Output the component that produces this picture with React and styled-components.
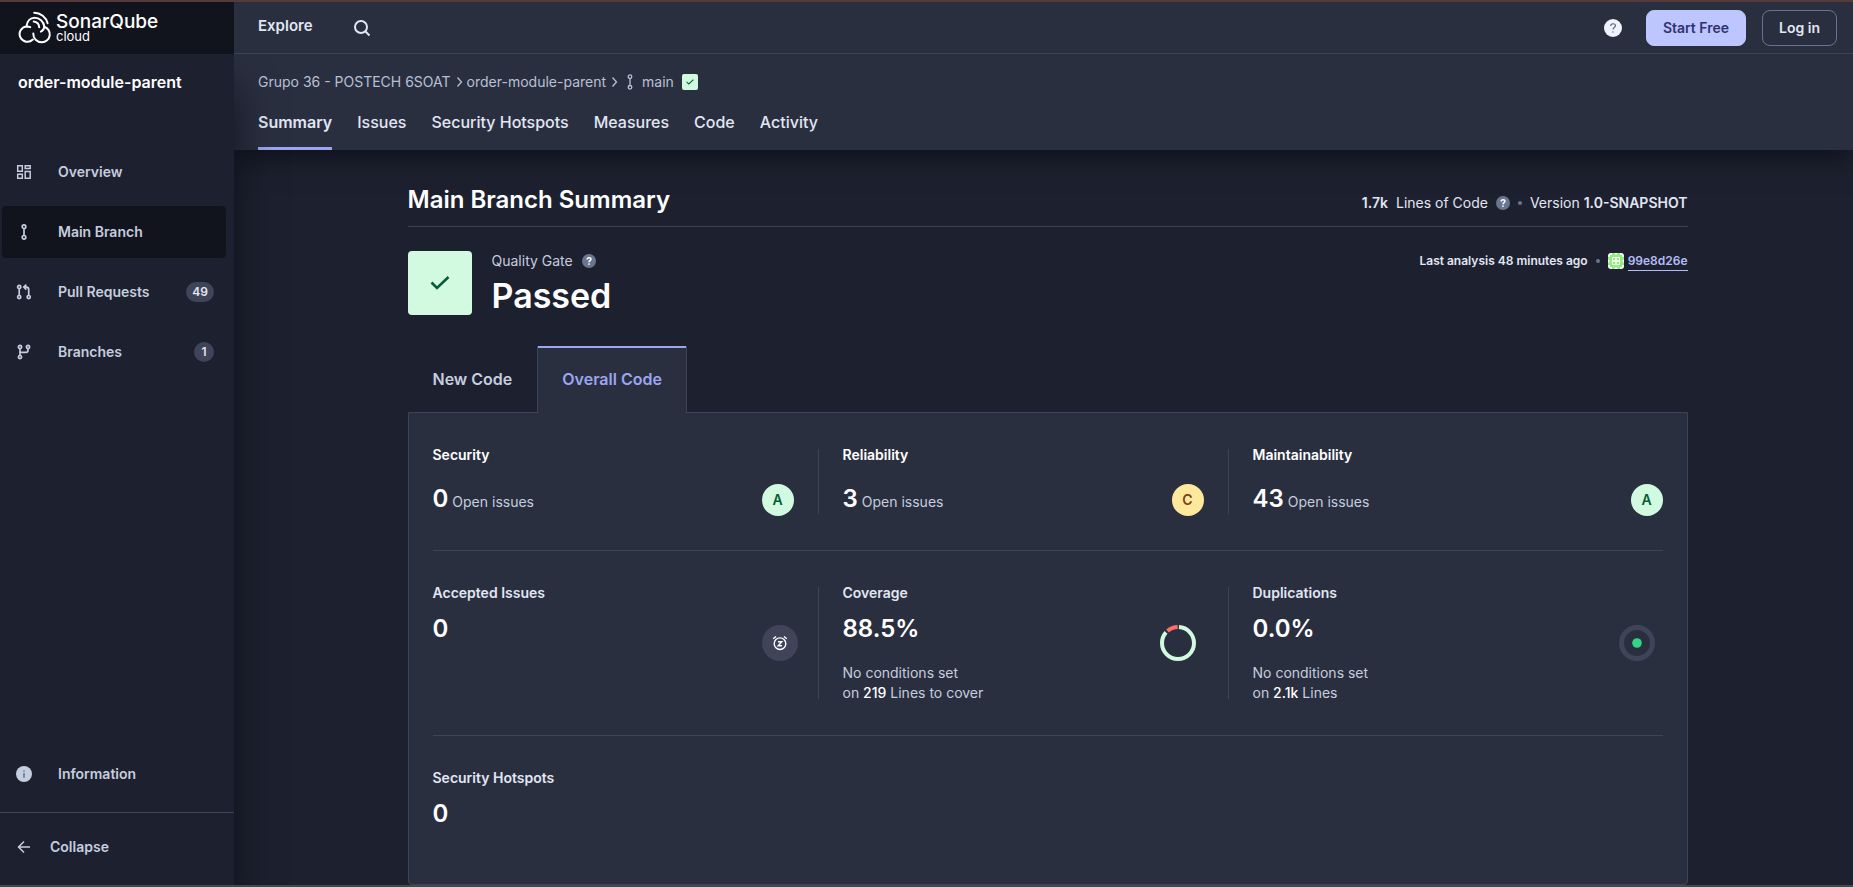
import React from "react";
import styled, { createGlobalStyle } from "styled-components";

const c = {
  bg: "#1d212f",
  panel: "#2a2f40",
  dark: "#11141d",
  line: "#3e4357",
  accent: "#9ba6f0",
  subtle: "#c5cddf",
  text: "#e1e6f3",
  strong: "#ffffff",
  slate: "#6a7590",
  mint: "#d1fae0",
  green: "#055e39",
};

const Global = createGlobalStyle`
  *, *::before, *::after { box-sizing: border-box; }
  body { margin: 0; background: ${c.bg}; color: ${c.text}; font: 400 14px/20px Inter, "Liberation Sans", sans-serif; }
  h1, h2, h3, p, ul { margin: 0; padding: 0; font-size: inherit; font-weight: inherit; }
  ul { list-style: none; }
  a { color: inherit; text-decoration: none; }
  button { font: inherit; color: inherit; background: none; border: 0; padding: 0; cursor: pointer; }
  svg { display: block; flex: none; }
`;

const Frame = styled.div`
  height: 100vh;
  overflow: hidden;
  display: flex;
  flex-direction: column;
  border-top: 2px solid #563a3b;
  border-bottom: 2px solid #45474d;
`;

const TopBar = styled.header`
  display: flex;
  flex: none;
  height: 52px;
  position: relative;
  z-index: 3;
`;

const Brand = styled.a`
  flex: none;
  width: 234px;
  padding-left: 18px;
  display: flex;
  align-items: center;
  gap: 4px;
  background: ${c.dark};
  color: ${c.strong};
`;

const BrandName = styled.span`
  display: flex;
  flex-direction: column;
  font-size: 19px;
  line-height: 16px;
  font-weight: 500;
  small {
    font-size: 13px;
    line-height: 13px;
    font-weight: 400;
  }
`;

const TopNav = styled.nav`
  flex: 1;
  display: flex;
  align-items: center;
  padding: 0 16px 0 24px;
  background: ${c.panel};
  border-bottom: 1px solid ${c.line};
`;

const ExploreLink = styled.a`
  font-size: 15px;
  font-weight: 600;
  margin-right: 40px;
  padding-bottom: 4px;
`;

const TopActions = styled.div`
  margin-left: auto;
  display: flex;
  align-items: center;
  gap: 16px;
`;

const HelpButton = styled.button`
  margin-right: 8px;
`;

const Button = styled.button`
  height: 36px;
  padding: 0 16px;
  border-radius: 8px;
  font-weight: 600;
  border: 1px solid ${(p) => (p.$primary ? "#bdc6ff" : "#6b7193")};
  background: ${(p) => (p.$primary ? "#bdc6ff" : "transparent")};
  color: ${(p) => (p.$primary ? "#2f3370" : c.text)};
`;

const Body = styled.div`
  flex: 1;
  min-height: 0;
  display: flex;
`;

const Sidebar = styled.aside`
  flex: none;
  width: 234px;
  display: flex;
  flex-direction: column;
  background: ${c.bg};
  position: relative;
  z-index: 2;
  box-shadow: 4px 32px 36px rgba(6, 8, 16, 0.55);
`;

const ProjectName = styled.h2`
  font-size: 16px;
  line-height: 24px;
  font-weight: 600;
  padding: 16px 18px 0;
  color: ${c.strong};
`;

const SideList = styled.ul`
  display: flex;
  flex-direction: column;
  gap: 8px;
  margin: ${(p) => (p.$bottom ? "auto 8px 12px 2px" : "52px 8px 0 2px")};
`;

const SideLink = styled.a`
  display: flex;
  align-items: center;
  gap: 26px;
  height: 52px;
  padding: 0 12px 0 14px;
  border-radius: 4px;
  font-weight: 600;
  color: ${c.subtle};
  background: ${(p) => (p.$active ? c.dark : "transparent")};
`;

const Count = styled.span`
  margin-left: auto;
  min-width: 20px;
  padding: 0 6px;
  border-radius: 10px;
  background: #3f4459;
  color: ${c.text};
  font-size: 12px;
  line-height: 20px;
  text-align: center;
`;

const Collapse = styled.button`
  display: flex;
  align-items: center;
  gap: 18px;
  height: 73px;
  padding: 0 16px 4px;
  border-top: 1px solid ${c.line};
  font-weight: 600;
  color: ${c.subtle};
`;

const Main = styled.main`
  flex: 1;
  min-width: 0;
  overflow: hidden;
`;

const ContextBar = styled.div`
  background: ${c.panel};
  padding: 18px 24px 0;
  height: 96px;
  display: flex;
  flex-direction: column;
  justify-content: space-between;
  box-shadow: 0 8px 24px rgba(6, 8, 16, 0.6);
`;

const Crumbs = styled.nav`
  display: flex;
  align-items: center;
  gap: 4px;
  color: #b8c0d6;
`;

const Branch = styled.span`
  display: flex;
  align-items: center;
  gap: 6px;
  padding-left: 2px;
`;

const SmallGate = styled.span`
  width: 16px;
  height: 16px;
  margin-left: 4px;
  border-radius: 2px;
  display: grid;
  place-items: center;
  background: ${c.mint};
`;

const Tabs = styled.nav`
  display: flex;
  gap: 25px;
`;

const Tab = styled.a`
  font-size: 16px;
  line-height: 24px;
  padding-bottom: 13px;
  font-weight: ${(p) => (p.$active ? 600 : 500)};
  border-bottom: 3px solid ${(p) => (p.$active ? c.accent : "transparent")};
`;

const Centered = styled.div`
  padding-left: 8px;
`;

const Content = styled.div`
  max-width: 1280px;
  margin: 0 auto;
  padding-top: 33px;
`;

const TitleRow = styled.div`
  display: flex;
  justify-content: space-between;
  align-items: center;
  height: 44px;
  padding-bottom: 10px;
  border-bottom: 1px solid ${c.line};
`;

const Title = styled.h1`
  font-size: 24px;
  line-height: 32px;
  font-weight: 600;
  color: ${c.strong};
`;

const Meta = styled.div`
  display: flex;
  align-items: center;
  gap: 8px;
  padding-top: ${(p) => (p.$small ? 0 : "6px")};
  font-size: ${(p) => (p.$small ? "12px" : "14px")};
  font-weight: ${(p) => (p.$small ? 600 : 400)};
  b { font-weight: 600; }
`;

const Dot = styled.span`
  width: 4px;
  height: 4px;
  border-radius: 50%;
  background: ${c.slate};
`;

const CommitLink = styled.a`
  color: #b3bcf8;
  line-height: 18px;
  border-bottom: 1px solid #b3bcf8;
`;

const Commit = styled.span`
  display: flex;
  align-items: center;
  gap: 4px;
`;

const GateRow = styled.section`
  display: flex;
  align-items: flex-start;
  justify-content: space-between;
  margin-top: 24px;
`;

const Gate = styled.div`
  display: flex;
  gap: 20px;
`;

const GateBadge = styled.div`
  width: 64px;
  height: 64px;
  border-radius: 4px;
  background: ${c.mint};
  display: grid;
  place-items: center;
`;

const GateLabel = styled.div`
  display: flex;
  align-items: center;
  gap: 9px;
  color: ${c.subtle};
`;

const GateStatus = styled.p`
  font-size: 34px;
  line-height: 50px;
  font-weight: 600;
  color: ${c.strong};
`;

const CodeTabs = styled.div`
  display: flex;
  margin-top: 25px;
`;

const CodeTab = styled.button`
  height: 67px;
  padding: 0 24px 2px;
  font-size: 16px;
  font-weight: 600;
  color: ${(p) => (p.$active ? c.accent : c.subtle)};
  background: ${(p) => (p.$active ? c.panel : "transparent")};
  border: solid ${(p) => (p.$active ? c.line : "transparent")};
  border-width: 0 1px;
  box-shadow: ${(p) => (p.$active ? `inset 0 2px ${c.accent}` : "none")};
  margin-bottom: -1px;
`;

const Panel = styled.section`
  border: 1px solid ${c.line};
  border-radius: 0 0 4px 4px;
  background: ${c.panel};
  padding: 0 24px;
`;

const Row = styled.div`
  display: grid;
  grid-template-columns: repeat(3, 1fr);
  padding: 36px 0;
  & + & { border-top: 1px solid ${c.line}; }
`;

const Cell = styled.div`
  display: flex;
  justify-content: space-between;
  align-items: ${(p) => (p.$rating ? "flex-end" : "center")};
  min-height: ${(p) => (p.$rating ? "64px" : "76px")};
  margin-right: 24px;
  padding-right: ${(p) => p.$end}px;
  border-right: 1px solid ${(p) => (p.$open ? "transparent" : c.line)};
  &:last-child:nth-child(3) {
    margin-right: 0;
    border-right: 0;
  }
`;

const CellText = styled.div`
  align-self: stretch;
  margin: -4px 0;
`;

const Label = styled.h3`
  font-weight: 600;
  color: ${(p) => (p.$bright ? c.strong : c.text)};
`;

const Figure = styled.p`
  font-size: 24px;
  line-height: 32px;
  font-weight: 600;
  color: ${c.strong};
  margin: ${(p) => (p.$issues ? "18px 0 0" : "10px 0 18px")};
  span {
    font-size: 14px;
    font-weight: 400;
    color: ${c.subtle};
    margin-left: 4px;
  }
`;

const Note = styled.p`
  color: ${c.subtle};
  b { font-weight: 500; color: ${c.strong}; }
`;

const Rating = styled.span`
  flex: none;
  width: 32px;
  height: 32px;
  margin-bottom: -2px;
  border-radius: 50%;
  text-align: center;
  line-height: 32px;
  font-weight: 600;
  background: ${(p) => (p.$grade === "A" ? c.mint : "#fee89b")};
  color: ${(p) => (p.$grade === "A" ? c.green : "#78431c")};
`;

const Snooze = styled.span`
  width: 36px;
  height: 36px;
  border-radius: 50%;
  background: #3f4459;
  color: ${c.strong};
  display: grid;
  place-items: center;
`;

const Logo = () => (
  <svg width="34" height="34" viewBox="0 0 34 34" fill="none" stroke="#fff" strokeWidth="2" strokeLinecap="round">
    <path d="M14.800 28.500A7.700 7.700 0 1 1 9 15.400c1.200 0 2.200.2 3.200.7" />
    <path d="M15.300 22.500c-.2 5.100 3.600 8.800 8.600 8.800a8 8 0 0 0 2.400-15.600c-.2 2.200-1.300 3.900-3.400 4.900" />
    <path d="M8.600 15c.6-4.900 3.800-8.200 8-8.200 5 0 9 3.500 9.700 8.600" />
    <path d="M15.700 10.600c3.300.4 5.300 2.600 5.500 5.600" />
    <path d="M16.200 1.700c6.400 0 11.900 4.500 13.400 10.500" />
  </svg>
);

const SearchIcon = () => (
  <svg width="18" height="18" viewBox="0 0 18 18" fill="none" stroke="#e1e6f3" strokeWidth="2">
    <circle cx="8" cy="8" r="6" />
    <path d="m12.500 12.500 4 4" />
  </svg>
);

const HelpIcon = ({ size = 14, fill = c.slate, ink = "#fff", weight = 1.6 }) => (
  <svg width={size} height={size} viewBox="0 0 14 14" fill="none">
    <circle cx="7" cy="7" r="7" fill={fill} />
    <path d="M5.200 5.500C5.200 4.300 6 3.700 7 3.700s1.900.6 1.900 1.600c0 1.300-1.900 1.300-1.900 2.900" stroke={ink} strokeWidth={weight} />
    <circle cx="7" cy="10.100" r={weight / 1.8} fill={ink} />
  </svg>
);

const CheckIcon = ({ size }) => (
  <svg width={size} height={size} viewBox="0 0 20 20" fill="none" stroke={c.green} strokeWidth="2.600">
    <path d="m1.500 9.500 5.500 5.500L18.500 4" />
  </svg>
);

const BranchIcon = ({ kind = "main", color = c.subtle }) => (
  <svg width={kind === "crumb" ? 12 : 16} height="16" viewBox={kind === "crumb" ? "2 0 12 16" : "0 0 16 16"} fill="none" stroke={color} strokeWidth={kind === "crumb" ? 1.3 : 1.7}>
    {(kind === "main" || kind === "crumb") && (
      <>
        <circle cx="8" cy="2.700" r="1.800" />
        <circle cx="8" cy="13.300" r="1.800" />
        <path d="M8 4.500v7" />
      </>
    )}
    {kind === "pull" && (
      <>
        <circle cx="3.200" cy="2.900" r="1.600" />
        <circle cx="3.200" cy="13.100" r="1.600" />
        <circle cx="12.700" cy="13.100" r="1.600" />
        <path d="M3.200 4.500v7M12.700 11.500V5.500q0-2.400-2.400-2.400H8.500M10.300.6 7.800 3.100l2.500 2.500" />
      </>
    )}
    {kind === "branches" && (
      <>
        <circle cx="4" cy="2.900" r="1.600" />
        <circle cx="4" cy="13.100" r="1.600" />
        <circle cx="12" cy="2.900" r="1.600" />
        <path d="M4 4.500v7M12 4.500v1.700q0 2.200-2.200 2.200H4" />
      </>
    )}
  </svg>
);

const OverviewIcon = () => (
  <svg width="16" height="16" viewBox="0 0 16 16" fill="none" stroke={c.subtle} strokeWidth="1.500">
    <path d="M1.700 1.700h4.600v5.600H1.700zM9.200 1.700h5v2.800h-5zM1.700 10.200h4.600v4H1.700zM9.200 7.500h5v6.700h-5z" />
  </svg>
);

const InfoIcon = () => (
  <svg width="16" height="16" viewBox="0 0 16 16">
    <circle cx="8" cy="8" r="8" fill={c.subtle} />
    <path d="M7.400 4.500h1.200v1.300H7.400zM7.400 7h1.200v4.800H7.400z" fill="#3f5a80" />
  </svg>
);

const ArrowIcon = () => (
  <svg width="16" height="16" viewBox="0 0 16 16" fill="none" stroke={c.subtle} strokeWidth="1.500">
    <path d="M14 8H2.800M8 2.500 2.500 8 8 13.500" />
  </svg>
);

const Chevron = () => (
  <svg width="8" height="12" viewBox="0 0 8 12" fill="none" stroke="#b8c0d6" strokeWidth="1.300">
    <path d="m2.500 1.500 4 4.500-4 4.500" />
  </svg>
);

const Avatar = () => (
  <svg width="16" height="16" viewBox="0 0 16 16">
    <rect width="16" height="16" rx="3" fill="#fff" />
    <path d="M4 0h2l2 2 2-2h2v2h2v2h2v2l-2 2 2 2v2h-2v2h-2v2h-2l-2-2-2 2H4v-2H2v-2H0v-2l2-2-2-2V4h2V2h2z" fill="#8ef07a" />
    <path d="M4 4h8v8H4z" fill="#fff" />
    <path d="M5 5h2.300v2.300H5zM8.700 5H11v2.300H8.700zM5 8.700h2.300V11H5zM8.700 8.700H11V11H8.700z" fill="#8ef07a" />
  </svg>
);

const SnoozeIcon = () => (
  <svg width="16" height="16" viewBox="0 0 16 16" fill="none" stroke="currentColor" strokeWidth="1.400">
    <circle cx="8" cy="8.700" r="5.800" />
    <path d="M1.200 3.800 4 1.500M14.800 3.800 12 1.500M6 6.700h3.800L6.200 10.800H10" />
  </svg>
);

const CoverageRing = ({ covered }) => {
  const r = 16;
  const length = 2 * Math.PI * r;
  const gap = 2;
  const good = length * covered;
  return (
    <svg width="36" height="36" viewBox="0 0 36 36" fill="none" strokeWidth="4">
      <g transform="rotate(-90 18 18)">
        <circle cx="18" cy="18" r={r} stroke={c.mint} strokeDasharray={`${good - gap} ${length}`} strokeDashoffset={-gap / 2} />
        <circle cx="18" cy="18" r={r} stroke="#f97066" strokeDasharray={`${length - good - gap} ${length}`} strokeDashoffset={-good - gap / 2} />
      </g>
    </svg>
  );
};

const DuplicationRing = () => (
  <svg width="36" height="36" viewBox="0 0 36 36" fill="none">
    <circle cx="18" cy="18" r="15.500" stroke="#3f4459" strokeWidth="5" />
    <circle cx="18" cy="18" r="4.800" fill="#32d583" />
  </svg>
);

const sideItems = [
  { label: "Overview", icon: <OverviewIcon /> },
  { label: "Main Branch", icon: <BranchIcon />, active: true },
  { label: "Pull Requests", icon: <BranchIcon kind="pull" />, count: 49 },
  { label: "Branches", icon: <BranchIcon kind="branches" />, count: 1 },
];

const tabs = ["Summary", "Issues", "Security Hotspots", "Measures", "Code", "Activity"];

const ratings = [
  { label: "Security", count: 0, grade: "A", end: 24 },
  { label: "Reliability", count: 3, grade: "C", end: 24 },
  { label: "Maintainability", count: 43, grade: "A", end: 0 },
];

export default function App() {
  return (
    <>
      <Global />
      <Frame>
        <TopBar>
          <Brand href="#" aria-label="SonarQube cloud">
            <Logo />
            <BrandName>
              SonarQube
              <small>cloud</small>
            </BrandName>
          </Brand>
          <TopNav aria-label="Main">
            <ExploreLink href="#">Explore</ExploreLink>
            <button aria-label="Search"><SearchIcon /></button>
            <TopActions>
              <HelpButton aria-label="Help">
                <HelpIcon size={18} fill="#eff2fc" ink="#5a6079" weight={0.9} />
              </HelpButton>
              <Button $primary>Start Free</Button>
              <Button>Log in</Button>
            </TopActions>
          </TopNav>
        </TopBar>
        <Body>
          <Sidebar>
            <ProjectName>order-module-parent</ProjectName>
            <SideList>
              {sideItems.map((item) => (
                <li key={item.label}>
                  <SideLink href="#" $active={item.active}>
                    {item.icon}
                    {item.label}
                    {item.count && <Count>{item.count}</Count>}
                  </SideLink>
                </li>
              ))}
            </SideList>
            <SideList $bottom>
              <li>
                <SideLink href="#"><InfoIcon />Information</SideLink>
              </li>
            </SideList>
            <Collapse><ArrowIcon />Collapse</Collapse>
          </Sidebar>
          <Main>
            <ContextBar>
              <Crumbs aria-label="Breadcrumb">
                <a href="#">Grupo 36 - POSTECH 6SOAT</a>
                <Chevron />
                <a href="#">order-module-parent</a>
                <Chevron />
                <Branch><BranchIcon kind="crumb" color="#b8c0d6" />main</Branch>
                <SmallGate><CheckIcon size={8} /></SmallGate>
              </Crumbs>
              <Tabs aria-label="Project">
                {tabs.map((name, i) => (
                  <Tab key={name} href="#" $active={i === 0}>{name}</Tab>
                ))}
              </Tabs>
            </ContextBar>
            <Centered>
              <Content>
                <TitleRow>
                  <Title>Main Branch Summary</Title>
                  <Meta>
                    <b>1.7k</b>
                    <span>Lines of Code</span>
                    <HelpIcon />
                    <Dot />
                    <span>Version <b>1.0-SNAPSHOT</b></span>
                  </Meta>
                </TitleRow>
                <GateRow>
                  <Gate>
                    <GateBadge><CheckIcon size={20} /></GateBadge>
                    <div>
                      <GateLabel>Quality Gate <HelpIcon /></GateLabel>
                      <GateStatus>Passed</GateStatus>
                    </div>
                  </Gate>
                  <Meta $small>
                    <span>Last analysis 48 minutes ago</span>
                    <Dot />
                    <Commit><Avatar /><CommitLink href="#">99e8d26e</CommitLink></Commit>
                  </Meta>
                </GateRow>
                <CodeTabs role="tablist">
                  <CodeTab role="tab" aria-selected="false">New Code</CodeTab>
                  <CodeTab role="tab" aria-selected="true" $active>Overall Code</CodeTab>
                </CodeTabs>
                <Panel>
                  <Row>
                    {ratings.map((r) => (
                      <Cell key={r.label} $rating $end={r.end}>
                        <CellText>
                          <Label $bright>{r.label}</Label>
                          <Figure $issues>{r.count}<span>Open issues</span></Figure>
                        </CellText>
                        <Rating $grade={r.grade}>{r.grade}</Rating>
                      </Cell>
                    ))}
                  </Row>
                  <Row>
                    <Cell $end={20}>
                      <CellText>
                        <Label>Accepted Issues</Label>
                        <Figure>0</Figure>
                      </CellText>
                      <Snooze><SnoozeIcon /></Snooze>
                    </Cell>
                    <Cell $end={32}>
                      <CellText>
                        <Label>Coverage</Label>
                        <Figure>88.5%</Figure>
                        <Note>No conditions set<br />on <b>219</b> Lines to cover</Note>
                      </CellText>
                      <CoverageRing covered={0.87} />
                    </Cell>
                    <Cell $end={8}>
                      <CellText>
                        <Label>Duplications</Label>
                        <Figure>0.0%</Figure>
                        <Note>No conditions set<br />on <b>2.1k</b> Lines</Note>
                      </CellText>
                      <DuplicationRing />
                    </Cell>
                  </Row>
                  <Row>
                    <Cell $end={0} $open>
                      <CellText>
                        <Label>Security Hotspots</Label>
                        <Figure>0</Figure>
                      </CellText>
                    </Cell>
                  </Row>
                </Panel>
              </Content>
            </Centered>
          </Main>
        </Body>
      </Frame>
    </>
  );
}
